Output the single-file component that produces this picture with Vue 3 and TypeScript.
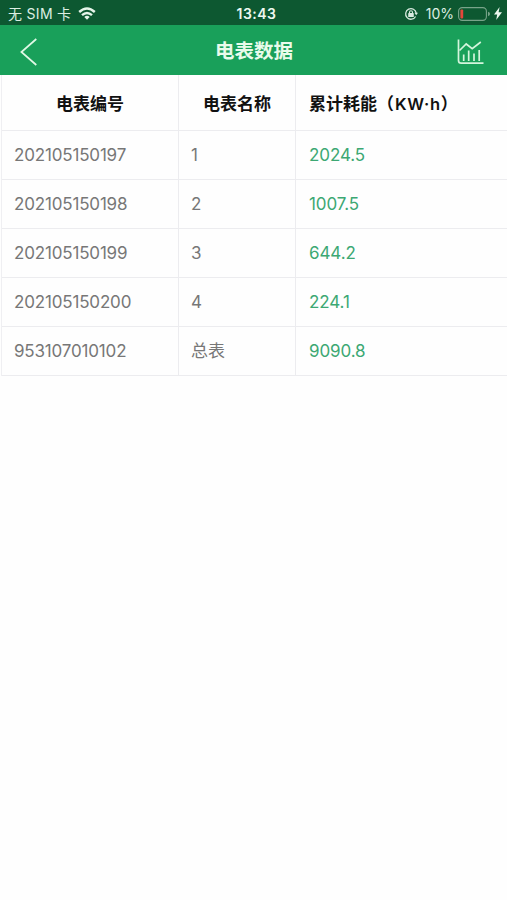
<script setup lang="ts">
interface Meter {
  id: string
  name: string
  energy: string
}

const meters: Meter[] = [
  { id: '202105150197', name: '1', energy: '2024.5' },
  { id: '202105150198', name: '2', energy: '1007.5' },
  { id: '202105150199', name: '3', energy: '644.2' },
  { id: '202105150200', name: '4', energy: '224.1' },
  { id: '953107010102', name: '总表', energy: '9090.8' },
]
</script>

<template>
  <div class="screen">
    <div class="status">
      <div class="carrier">
        <span class="sim">无 SIM 卡</span>
        <svg class="wifi" width="18" height="13" viewBox="0 0 18 13" fill="none" stroke="#e6f5ea" stroke-width="2.4">
          <path d="M1.2 5Q9-2 16.8 5" />
          <path d="M4 8.2Q9 3.6 14 8.2" />
          <path d="M6.3 10Q9 7.6 11.7 10L9 12.7Z" fill="#e6f5ea" stroke="none" />
        </svg>
      </div>
      <span class="time">13:43</span>
      <div class="power">
        <svg class="lock" width="14" height="14" viewBox="0 0 14 14" fill="none" stroke="#d8eadf">
          <path d="M11.6 9.5A5.3 5.3 0 1 1 12.2 6.2" stroke-width="1.3" />
          <path d="M10.4 5.7H14L12.2 8.2Z" fill="#d8eadf" stroke="none" />
          <rect x="4.2" y="6.1" width="5.6" height="3.9" rx=".6" fill="#d8eadf" stroke="none" />
          <path d="M5.5 6.5V5.2A1.5 1.5 0 0 1 8.5 5.2V6.5" stroke-width="1.1" />
        </svg>
        <span class="percent">10%</span>
        <svg class="battery" width="33" height="14" viewBox="0 0 33 14">
          <rect x=".6" y=".6" width="27.8" height="12.8" rx="3.6" fill="none" stroke="#79a48a" stroke-width="1.1" />
          <rect x="2.4" y="2.4" width="2.8" height="9.2" rx="1" fill="#e4473b" />
          <path d="M30 4.8Q32 5.4 32 7T30 9.2Z" fill="#79a48a" />
        </svg>
        <svg class="bolt" width="8" height="13" viewBox="0 0 8 12" preserveAspectRatio="none" fill="#edf8ef">
          <path d="M5.6 0L0 6.9H3.2L2.2 12L8 4.8H4.6Z" />
        </svg>
      </div>
    </div>
    <header class="navbar">
      <svg class="back" width="18" height="28" viewBox="0 0 18 28" fill="none" stroke="#e0f8e5" stroke-width="1.7">
        <path d="M16.3 1L1.4 14L16.3 27" />
      </svg>
      <h1>电表数据</h1>
      <svg class="chart" width="27" height="26" viewBox="0 0 27 26" fill="none" stroke="#d4f5dd" stroke-width="1.7">
        <path d="M1.5 .5V21.5Q1.5 24.2 4.2 24.2H26.5" />
        <path d="M2.5 11.5L9.2 5L15.2 9.7L23.8 3" />
        <path d="M6.7 15.5V22M11.7 11.5V22M17 14.5V22M22.2 11V22" />
      </svg>
    </header>
    <table>
      <colgroup>
        <col class="col-id" />
        <col class="col-name" />
        <col class="col-energy" />
      </colgroup>
      <thead>
        <tr>
          <th>电表编号</th>
          <th>电表名称</th>
          <th>累计耗能（<span class="unit">KW·h</span>）</th>
        </tr>
      </thead>
      <tbody>
        <tr v-for="meter in meters" :key="meter.id">
          <td class="id">{{ meter.id }}</td>
          <td>{{ meter.name }}</td>
          <td class="energy">{{ meter.energy }}</td>
        </tr>
      </tbody>
    </table>
  </div>
</template>

<style>
body {
  background: #fefefe;
}
</style>

<style scoped>
.screen {
  width: 507px;
  min-height: 900px;
  overflow: hidden;
  background: #fefefe;
  font-family: Inter, 'Noto Sans CJK SC', sans-serif;
}

.status {
  display: grid;
  grid-template-columns: 1fr auto 1fr;
  align-items: center;
  box-sizing: border-box;
  height: 25px;
  padding: 2px 5px 0 8px;
  background: #0d5831;
  color: #dceee2;
  font-size: 14px;
  line-height: 23px;
}

.carrier,
.power {
  display: flex;
  align-items: center;
}

.sim {
  letter-spacing: 0.3px;
}

.wifi {
  margin-left: 7px;
}

.time {
  padding-left: 3px;
  color: #eef8f0;
  font-weight: 600;
  letter-spacing: 0.5px;
}

.power {
  justify-content: flex-end;
}

.percent {
  margin: 0 4px 0 8px;
}

.bolt {
  margin-left: 3px;
}

.navbar {
  display: grid;
  grid-template-columns: 1fr auto 1fr;
  align-items: center;
  box-sizing: border-box;
  height: 50px;
  padding: 0 23px 0 20px;
  background: #19a05a;
}

.back {
  margin-top: 4px;
}

.chart {
  justify-self: end;
  margin-top: 3px;
}

h1 {
  margin: 0;
  padding: 2px 0 0 4px;
  color: #e9fbeb;
  font-size: 19.5px;
  font-weight: 600;
  line-height: 48px;
}

table {
  width: 506px;
  margin-left: 1px;
  table-layout: fixed;
  border-collapse: separate;
  border-spacing: 0;
  border-left: 1px solid #efeff2;
}

.col-id {
  width: 177px;
}

.col-name {
  width: 117px;
}

th,
td {
  box-sizing: border-box;
  padding: 0 12px;
  border-right: 1px solid #ececef;
  border-bottom: 1px solid #ececef;
  white-space: nowrap;
}

th:last-child,
td:last-child {
  padding-left: 13px;
  border-right: 0;
}

th {
  height: 56px;
  color: #111;
  font-size: 17px;
  font-weight: 600;
  text-align: center;
}

th:last-child {
  text-align: left;
}

.unit {
  margin-left: 1px;
  font-size: 16.5px;
  letter-spacing: 0.6px;
}

td {
  height: 49px;
  color: #777;
  font-size: 17px;
  line-height: 22px;
  text-align: left;
}

.id {
  letter-spacing: -0.17px;
}

.energy {
  color: #3ca873;
  letter-spacing: -0.1px;
}
</style>
